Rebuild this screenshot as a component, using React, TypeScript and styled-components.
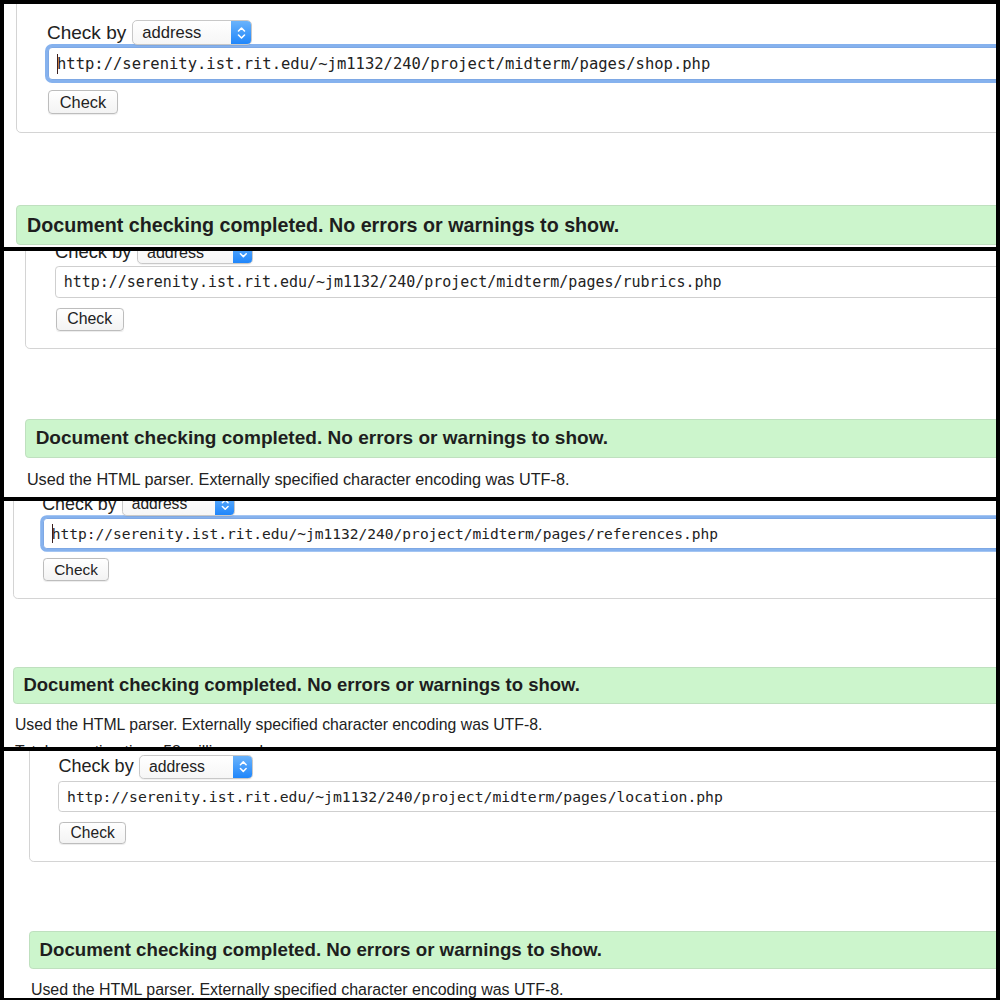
import styled, { createGlobalStyle, css } from "styled-components";

const GlobalStyle = createGlobalStyle`
  html, body {
    margin: 0;
    padding: 0;
    background: #000;
  }
  body {
    font-family: "Liberation Sans", Arial, sans-serif;
    color: #222;
  }
`;

const Frame = styled.div`
  width: 1000px;
  height: 1000px;
  box-sizing: border-box;
  padding: 4px 4px 2px 4px;
  background: #000;
  display: flex;
  flex-direction: column;
  gap: 4px;
`;

const Shot = styled.div<{ $height: number }>`
  height: ${(p) => p.$height}px;
  flex: none;
  overflow: hidden;
  background: #fff;
`;

const Page = styled.div<{ $zoom: number; $top: number; $left: number }>`
  zoom: ${(p) => p.$zoom};
  margin-top: ${(p) => p.$top}px;
  margin-left: ${(p) => p.$left}px;
  width: 1200px;
`;

const Fieldset = styled.div`
  border: 1px solid #d4d4d4;
  border-radius: 5px;
  padding: 20px 0 18px 30px;
`;

const CheckRow = styled.div`
  display: flex;
  align-items: center;
  height: 25px;
  margin-bottom: 2px;
`;

const Label = styled.span`
  font-size: 19px;
  color: #222;
  margin-right: 6px;
  margin-left: 0;
`;

const Select = styled.div`
  width: 120px;
  height: 25px;
  box-sizing: border-box;
  border: 1px solid #c8c8c8;
  border-radius: 5px;
  background: linear-gradient(#ffffff, #f6f6f6);
  display: flex;
  align-items: center;
  overflow: hidden;
  box-shadow: 0 1px 1px rgba(0, 0, 0, 0.06);
`;

const SelectText = styled.span`
  flex: 1;
  padding-left: 9px;
  font-size: 16.6px;
  color: #222;
`;

const Stepper = styled.div`
  width: 21px;
  height: 25px;
  margin: -1px -1px -1px 0;
  border-radius: 0 5px 5px 0;
  background: linear-gradient(#6db5fb, #1c84fb);
  display: flex;
  align-items: center;
  justify-content: center;
`;

const UrlBox = styled.div<{ $focused: boolean }>`
  height: 33px;
  box-sizing: border-box;
  border-radius: 4px;
  display: flex;
  align-items: center;
  padding-left: 8px;
  font-family: "DejaVu Sans Mono", "Liberation Mono", monospace;
  font-size: 15.5px;
  color: #222;
  background: #fff;
  ${(p) =>
    p.$focused
      ? css`
          border: 1px solid #7ea8e4;
          box-shadow: 0 0 0 3px #86b2ee;
          margin-left: 1px;
        `
      : css`
          border: 1px solid #cfcfcf;
          margin-left: 0;
        `}
`;

const Caret = styled.span`
  display: inline-block;
  width: 1px;
  height: 20px;
  background: #3a2020;
  margin-right: -1px;
`;

const CheckButton = styled.div`
  width: 70px;
  height: 24px;
  box-sizing: border-box;
  margin-top: 10px;
  margin-left: 1px;
  border: 1px solid #bdbdbd;
  border-radius: 4px;
  background: linear-gradient(#ffffff, #f3f3f3);
  box-shadow: 0 1px 1px rgba(0, 0, 0, 0.08);
  display: flex;
  align-items: center;
  justify-content: center;
  font-size: 16.4px;
  color: #222;
`;

const Result = styled.div`
  margin-top: 72px;
  height: 40px;
  box-sizing: border-box;
  border: 1px solid #bfe0bf;
  border-radius: 4px;
  background: #ccf5cc;
  display: flex;
  align-items: center;
  padding-left: 10px;
  font-size: 19.7px;
  font-weight: bold;
  color: #1e1e1e;
`;

const Note = styled.p`
  margin: 12px 0 0 2px;
  font-size: 16.8px;
  line-height: 22px;
  color: #222;
`;

const NoteNext = styled(Note)`
  margin-top: 6px;
`;

function Chevrons() {
  return (
    <svg width="9" height="14" viewBox="0 0 9 14">
      <path
        d="M1.5 5 L4.5 2 L7.5 5 M1.5 9 L4.5 12 L7.5 9"
        fill="none"
        stroke="#fff"
        strokeWidth="1.6"
        strokeLinecap="round"
        strokeLinejoin="round"
      />
    </svg>
  );
}

type ShotProps = {
  height: number;
  zoom: number;
  top: number;
  left: number;
  page: string;
  focused: boolean;
};

function ValidatorShot({ height, zoom, top, left, page, focused }: ShotProps) {
  return (
    <Shot $height={height}>
      <Page $zoom={zoom} $top={top} $left={left}>
        <Fieldset>
          <CheckRow>
            <Label>Check by</Label>
            <Select>
              <SelectText>address</SelectText>
              <Stepper>
                <Chevrons />
              </Stepper>
            </Select>
          </CheckRow>
          <UrlBox $focused={focused}>
            {focused && <Caret />}
            {`http://serenity.ist.rit.edu/~jm1132/240/project/midterm/pages/${page}`}
          </UrlBox>
          <CheckButton>Check</CheckButton>
        </Fieldset>
        <Result>Document checking completed. No errors or warnings to show.</Result>
        <Note>
          Used the HTML parser. Externally specified character encoding was UTF-8.
        </Note>
        <NoteNext>Total execution time: 58 milliseconds.</NoteNext>
      </Page>
    </Shot>
  );
}

export default function App() {
  return (
    <Frame>
      <GlobalStyle />
      <ValidatorShot height={243} zoom={1} top={-5} left={12} page="shop.php" focused />
      <ValidatorShot height={246} zoom={0.967} top={-32.4} left={21.7} page="rubrics.php" focused={false} />
      <ValidatorShot height={246} zoom={0.94} top={-29.9} left={9.6} page="references.php" focused />
      <ValidatorShot height={247} zoom={0.95} top={-16.8} left={26.3} page="location.php" focused={false} />
    </Frame>
  );
}
